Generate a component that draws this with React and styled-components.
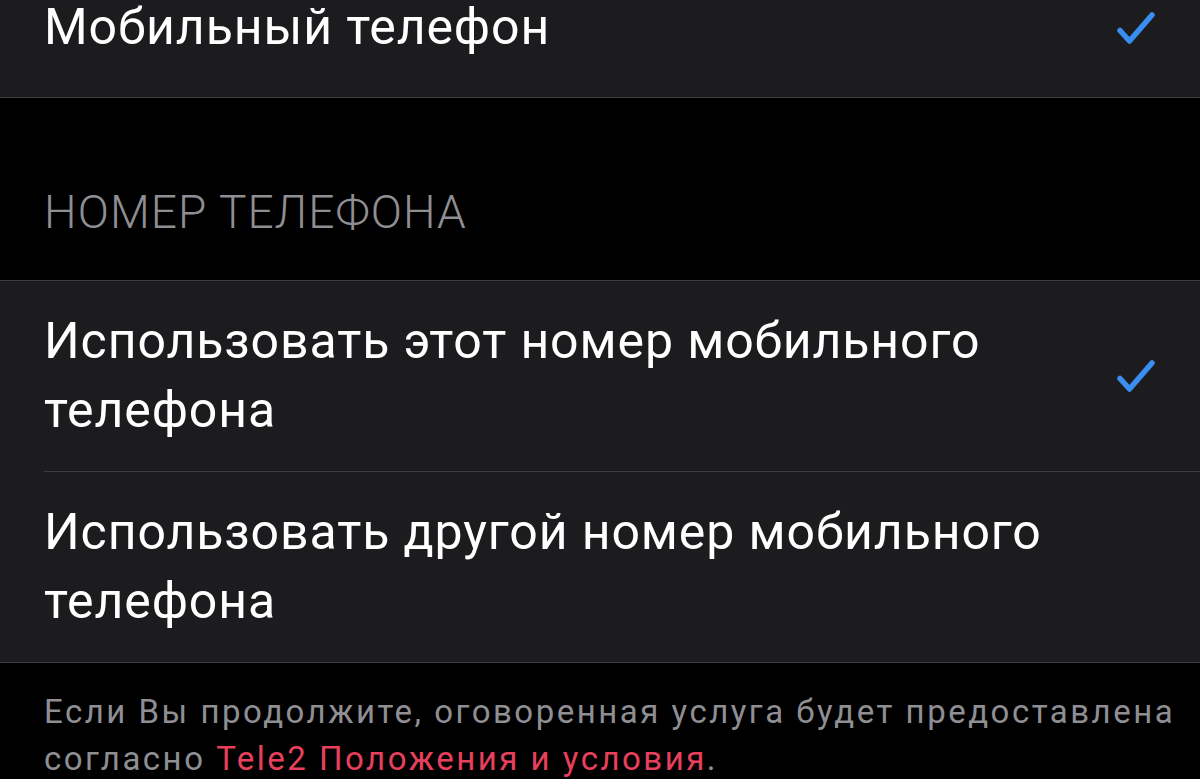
import React from "react";
import styled, { createGlobalStyle } from "styled-components";

const GlobalStyle = createGlobalStyle`
    html, body {
        margin: 0;
        padding: 0;
        background: #000;
    }
    body {
        font-family: Roboto, "Liberation Sans", sans-serif;
        -webkit-font-smoothing: antialiased;
    }
`;

const Check = () => (
    <svg width="40" height="34" viewBox="0 0 40 34" fill="none">
        <polyline
            points="4,19.5 13.5,30 36,4"
            stroke="#3a8ef2"
            strokeWidth="5.5"
            strokeLinecap="round"
            strokeLinejoin="round"
        />
    </svg>
);

const App = () => {
    return (
        <Page>
            <GlobalStyle />
            <Group $cropped>
                <Row $last $pad="0 0 35px">
                    <RowText>Мобильный телефон</RowText>
                    <Check />
                </Row>
            </Group>

            <SectionHeader>НОМЕР ТЕЛЕФОНА</SectionHeader>

            <Group>
                <Row>
                    <RowText>Использовать этот номер мобильного телефона</RowText>
                    <Check />
                </Row>
                <Row $last>
                    <RowText>Использовать другой номер мобильного телефона</RowText>
                </Row>
            </Group>

            <Footer>
                Если Вы продолжите, оговоренная услуга будет предоставлена
                согласно <FooterLink>Tele2 Положения и условия</FooterLink>.
            </Footer>
        </Page>
    );
};

const Page = styled.div`
    width: 1200px;
    min-height: 779px;
    background: #000;
    overflow: hidden;
`;

const Group = styled.div`
    background: #1c1c1e;
    border-top: ${({ $cropped }) => ($cropped ? "none" : "1px solid #3d3d40")};
    border-bottom: 1px solid #3d3d40;
    margin-top: ${({ $cropped }) => ($cropped ? "-7px" : "0")};
    padding-left: 44px;
`;

const Row = styled.div`
    display: flex;
    align-items: center;
    justify-content: space-between;
    padding: ${({ $pad }) => $pad || "26px 0"};
    padding-right: 44px;
    border-bottom: ${({ $last }) => ($last ? "none" : "1px solid #3d3d40")};
`;

const RowText = styled.div`
    color: #fff;
    font-size: 50px;
    line-height: 69px;
    letter-spacing: 0.9px;
    max-width: 1060px;
`;

const SectionHeader = styled.div`
    padding: 87px 44px 41px;
    color: #8e8e93;
    font-size: 46px;
    font-weight: 300;
    line-height: 54px;
    letter-spacing: 1.1px;
`;

const Footer = styled.div`
    padding: 25px 20px 0 44px;
    color: #8e8e93;
    font-size: 33px;
    line-height: 47px;
    letter-spacing: 2.5px;
`;

const FooterLink = styled.span`
    color: #e8405c;
`;

export default App;
